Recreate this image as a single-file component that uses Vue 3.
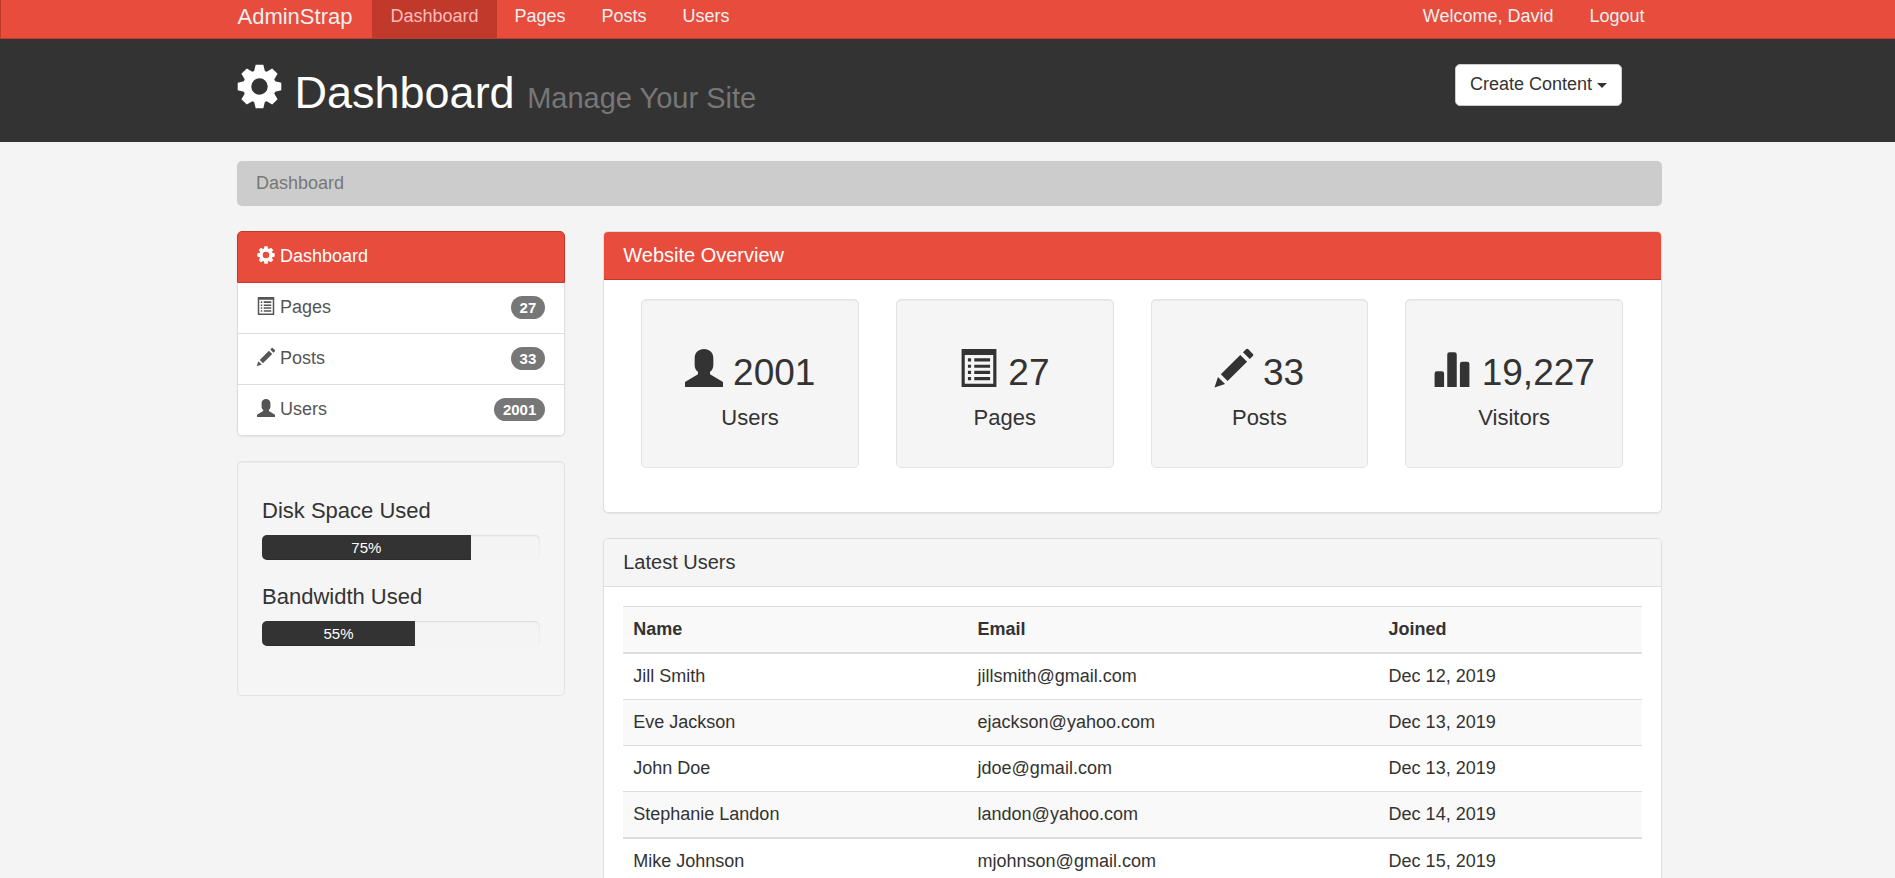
<script setup>
import { h } from 'vue'

const polar = (radius, degrees) => {
  const angle = (degrees * Math.PI) / 180
  return `${Math.round(600 + radius * Math.sin(angle))} ${Math.round(600 - radius * Math.cos(angle))}`
}

// Eight tapered teeth around a body with a round hole in the middle
const cogTeeth = Array.from({ length: 8 }, (_, i) => {
  const a = i * 45
  return [polar(440, a - 19), polar(590, a - 10), polar(590, a + 10), polar(440, a + 19)].join('L')
}).join('L')

const shapes = {
  cog: `M${cogTeeth}ZM600 380A220 220 0 1 0 600 820A220 220 0 1 0 600 380Z`,
  list: 'M50 0H1150V1200H50ZM150 190V1100H1050V190ZM250 290H350V395H250ZM450 290H950V395H450ZM250 495H350V595H250ZM450 495H950V595H450ZM250 690H350V790H250ZM450 690H950V790H450ZM250 885H350V990H250ZM450 885H950V990H450Z',
  pencil: 'M1011 -10Q1030 -10 1044 3L1197 156Q1210 170 1210 189T1197 222L1098 314L884 100L979 4Q992 -10 1011 -10ZM1013 400L398 1014L184 800L798 186ZM317 1104L-16 1216L94 881Z',
  user: 'M600 0C770 0 895 110 895 290V510C895 600 850 680 790 720V800L1200 1045V1200H0V1045L410 800V720C350 680 305 600 305 510V290C305 110 430 0 600 0Z',
  stats: 'M50 1200V770Q50 700 120 700H280Q350 700 350 770V1200ZM450 1200V170Q450 100 520 100H680Q750 100 750 170V1200ZM850 1200V470Q850 400 920 400H1080Q1150 400 1150 470V1200Z',
}

const Icon = ({ name }) =>
  h('svg', { viewBox: '0 0 1200 1200', 'aria-hidden': 'true' }, [
    h('path', { d: shapes[name], 'fill-rule': 'evenodd', fill: 'currentColor' }),
  ])
Icon.props = ['name']

const navLinks = ['Dashboard', 'Pages', 'Posts', 'Users']
const accountLinks = ['Welcome, David', 'Logout']
const sections = [
  { icon: 'cog', label: 'Dashboard' },
  { icon: 'list', label: 'Pages', count: 27 },
  { icon: 'pencil', label: 'Posts', count: 33 },
  { icon: 'user', label: 'Users', count: 2001 },
]
const usage = [
  { label: 'Disk Space Used', percent: 75 },
  { label: 'Bandwidth Used', percent: 55 },
]
const stats = [
  { icon: 'user', value: '2001', label: 'Users' },
  { icon: 'list', value: '27', label: 'Pages' },
  { icon: 'pencil', value: '33', label: 'Posts' },
  { icon: 'stats', value: '19,227', label: 'Visitors' },
]
const groups = [
  [
    ['Jill Smith', 'jillsmith@gmail.com', 'Dec 12, 2019'],
    ['Eve Jackson', 'ejackson@yahoo.com', 'Dec 13, 2019'],
    ['John Doe', 'jdoe@gmail.com', 'Dec 13, 2019'],
    ['Stephanie Landon', 'landon@yahoo.com', 'Dec 14, 2019'],
  ],
  [['Mike Johnson', 'mjohnson@gmail.com', 'Dec 15, 2019']],
]
</script>

<template>
  <div class="page">
    <nav class="navbar">
      <div class="container navbar-inner">
        <a class="brand" href="#">AdminStrap</a>
        <a
          v-for="(link, i) in navLinks"
          :key="link"
          class="nav-link"
          :class="{ active: i === 0 }"
          href="#"
        >{{ link }}</a>
        <div class="account">
          <a v-for="link in accountLinks" :key="link" class="nav-link" href="#">{{ link }}</a>
        </div>
      </div>
    </nav>

    <header class="header">
      <div class="container header-inner">
        <h1><Icon name="cog" class="icon" /> Dashboard <small>Manage Your Site</small></h1>
        <button class="create" type="button">Create Content <span class="caret"></span></button>
      </div>
    </header>

    <div class="container">
      <ol class="breadcrumb">
        <li>Dashboard</li>
      </ol>

      <div class="columns">
        <aside>
          <div class="list-group">
            <a
              v-for="(item, i) in sections"
              :key="item.label"
              class="list-item"
              :class="{ active: i === 0 }"
              href="#"
            >
              <span><Icon :name="item.icon" class="icon" /> {{ item.label }}</span>
              <span v-if="item.count" class="badge">{{ item.count }}</span>
            </a>
          </div>

          <div class="well usage">
            <template v-for="item in usage" :key="item.label">
              <h4>{{ item.label }}</h4>
              <div class="progress">
                <div class="progress-bar" :style="{ width: item.percent + '%' }">{{ item.percent }}%</div>
              </div>
            </template>
          </div>
        </aside>

        <main>
          <section class="panel">
            <h3 class="panel-title primary">Website Overview</h3>
            <div class="stats">
              <div v-for="stat in stats" :key="stat.label" class="well stat">
                <h2><Icon :name="stat.icon" class="icon" /> {{ stat.value }}</h2>
                <h4>{{ stat.label }}</h4>
              </div>
            </div>
          </section>

          <section class="panel">
            <h3 class="panel-title">Latest Users</h3>
            <div class="panel-body">
              <table>
                <thead>
                  <tr>
                    <th>Name</th>
                    <th>Email</th>
                    <th>Joined</th>
                  </tr>
                </thead>
                <tbody v-for="(rows, g) in groups" :key="g">
                  <tr v-for="row in rows" :key="row[1]">
                    <td v-for="cell in row" :key="cell">{{ cell }}</td>
                  </tr>
                </tbody>
              </table>
            </div>
          </section>
        </main>
      </div>
    </div>
  </div>
</template>

<style>
body {
  margin: 0;
  background: #f4f4f4;
}
html {
  scrollbar-width: none;
}
</style>

<style scoped>
.page,
.create {
  font-family: "Liberation Sans", Arial, sans-serif;
  font-size: 18px;
  line-height: 25px;
  color: #333;
}
.page * {
  box-sizing: border-box;
}
h1, h2, h3, h4 {
  margin: 0;
  font-weight: 400;
}
a {
  color: inherit;
  text-decoration: none;
}
.container {
  max-width: 1463px;
  margin: 0 auto;
  padding: 0 17px 0 21px;
}
.icon {
  width: 1em;
  height: 1em;
  vertical-align: -2px;
  overflow: visible;
}

.navbar {
  background: #e74c3c;
  border-bottom: 1px solid #c0392b;
  border-left: 1px solid #c0392b;
  color: #ecf0f1;
}
.navbar-inner {
  display: flex;
}
.brand {
  padding: 4px 20px 9px 0;
  font-size: 22px;
}
.nav-link {
  padding: 4px 18px 9px;
}
.nav-link.active {
  background: #c0392b;
  color: #ffbbbc;
}
.account {
  display: flex;
  margin-left: auto;
}

.header {
  background: #333;
  color: #fff;
}
.header-inner {
  display: flex;
  align-items: flex-start;
  justify-content: space-between;
  padding-top: 25px;
  padding-bottom: 22px;
}
h1 {
  font-size: 45px;
  line-height: 54px;
}
h1 .icon {
  vertical-align: -1px;
}
h1 small {
  font-size: 29px;
  line-height: 29px;
  color: #777;
}
.create {
  margin-right: 40px;
  padding: 7px 14px 8px;
  background: #fff;
  border: 1px solid #ccc;
  border-radius: 5px;
}
.caret {
  display: inline-block;
  border-top: 5px solid;
  border-left: 5px solid transparent;
  border-right: 5px solid transparent;
  vertical-align: middle;
}

.breadcrumb {
  margin: 19px 0 25px;
  padding: 10px 19px;
  background: #ccc;
  border-radius: 5px;
  color: #777;
  list-style: none;
}

.columns {
  display: grid;
  grid-template-columns: calc(25% - 28px) 1fr;
  gap: 38px;
  align-items: start;
}
.list-group {
  margin-bottom: 25px;
  background: #fff;
  border-radius: 5px;
  box-shadow: 0 1px 2px rgba(0, 0, 0, 0.07);
}
.list-item {
  display: flex;
  align-items: center;
  justify-content: space-between;
  padding: 12px 19px 13px;
  border: 1px solid #ddd;
  border-top: 0;
  color: #555;
}
.list-item.active {
  background: #e74c3c;
  border: 1px solid #c0392b;
  border-radius: 5px 5px 0 0;
  color: #fff;
}
.list-item:last-child {
  border-radius: 0 0 5px 5px;
}
.badge {
  padding: 4px 9px;
  background: #777;
  border-radius: 12px;
  color: #fff;
  font-size: 15px;
  font-weight: 700;
  line-height: 15px;
}

.well {
  background: #f5f5f5;
  border: 1px solid #e3e3e3;
  border-radius: 5px;
  box-shadow: inset 0 1px 1px rgba(0, 0, 0, 0.05);
}
h4 {
  font-size: 22px;
  line-height: 25px;
}
.usage {
  padding: 36px 24px 49px;
}
.progress {
  margin-top: 12px;
  height: 25px;
  background: #f4f4f4;
  border-radius: 5px;
  box-shadow: inset 0 1px 2px rgba(0, 0, 0, 0.1);
  overflow: hidden;
}
.progress + h4 {
  margin-top: 24px;
}
.progress-bar {
  height: 100%;
  background: #333;
  box-shadow: inset 0 -1px 0 rgba(0, 0, 0, 0.15);
  color: #fff;
  font-size: 15px;
  text-align: center;
}

.panel {
  margin-bottom: 25px;
  background: #fff;
  border: 1px solid #ddd;
  border-radius: 5px;
  box-shadow: 0 1px 1px rgba(0, 0, 0, 0.05);
}
.panel-title {
  padding: 11px 19px;
  background: #f5f5f5;
  border-bottom: 1px solid #ddd;
  border-radius: 4px 4px 0 0;
  font-size: 20px;
}
.panel-title.primary {
  background: #e74c3c;
  border-color: #c0392b;
  color: #fff;
}
.stats {
  display: grid;
  grid-template-columns: repeat(4, 1fr);
  gap: 37px;
  padding: 19px 38px 44px 37px;
}
.stat {
  padding: 49px 0 37px;
  text-align: center;
}
h2 {
  margin-bottom: 12px;
  font-size: 37px;
  line-height: 41px;
}
h2 .icon {
  width: 38px;
  height: 38px;
}
.panel-body {
  padding: 19px;
}
table {
  width: 100%;
  border-spacing: 0;
}
th,
td {
  padding: 10px;
  border-top: 1px solid #ddd;
  text-align: left;
}
th {
  border-bottom: 2px solid #ddd;
  background: #f9f9f9;
}
thead + tbody tr:first-child td {
  border-top: 0;
}
tbody + tbody tr:first-child td {
  border-top-width: 2px;
}
tbody tr:nth-child(even) td {
  background: #f9f9f9;
}
</style>
